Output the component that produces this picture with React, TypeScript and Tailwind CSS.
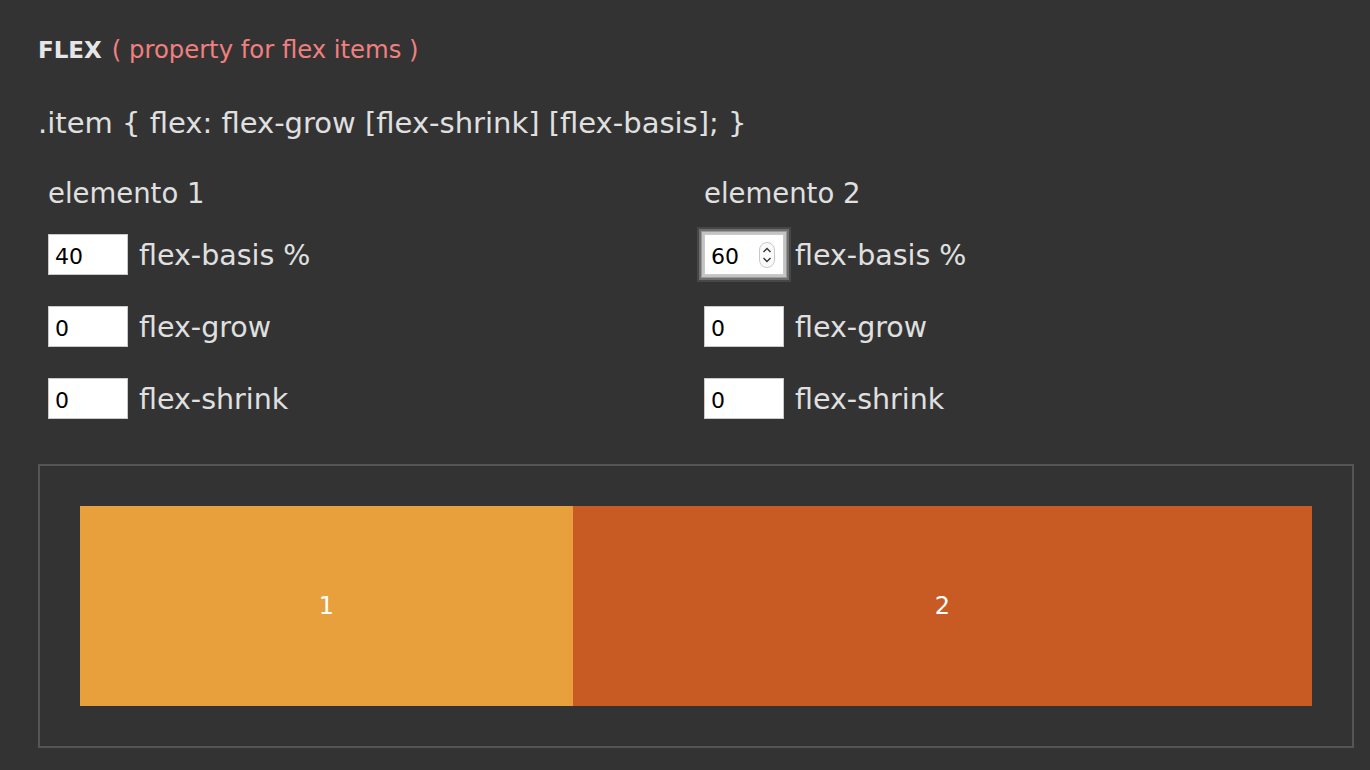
import React from "react";

const font = { fontFamily: '"DejaVu Sans", Verdana, sans-serif' };

function Spinner() {
  return (
    <svg width="16" height="26" viewBox="0 0 16 26" className="absolute right-[8px] top-[7px]">
      <rect x="0.5" y="0.5" width="15" height="25" rx="7.5" fill="#fafafa" stroke="#c8c8c8" />
      <path d="M4.5 10 L8 6.5 L11.5 10" fill="none" stroke="#333" strokeWidth="1.4" />
      <path d="M4.5 16 L8 19.5 L11.5 16" fill="none" stroke="#333" strokeWidth="1.4" />
    </svg>
  );
}

function Field({ value, label, focused }: { value: string; label: string; focused?: boolean }) {
  return (
    <div className="flex items-center h-[41px]">
      <div
        className={
          "relative w-[80px] h-[41px] bg-white border border-[#c9c9c9] flex items-center pl-[6px] pt-[3px] text-[22px] text-black " +
          (focused ? "shadow-[0_0_0_2px_#c4c4c4,0_0_0_3px_#9a9a9a,0_0_0_5px_#6e6e6e,0_0_0_7px_#474747]" : "")
        }
      >
        {value}
        {focused && <Spinner />}
      </div>
      <span className="ml-[11px] pt-[3px] text-[28.5px] text-[#e0e0e0] leading-none">{label}</span>
    </div>
  );
}

function Column({ title, basis }: { title: string; basis: string }) {
  return (
    <div className="pl-[10px]">
      <div className="text-[27.5px] text-[#e0e0e0] leading-none h-[27px] flex items-center pt-[1px]">{title}</div>
      <div className="mt-[27px] flex flex-col gap-[31px]">
        <Field value={basis} label="flex-basis %" focused={basis === "60"} />
        <Field value="0" label="flex-grow" />
        <Field value="0" label="flex-shrink" />
      </div>
    </div>
  );
}

export default function App() {
  return (
    <div className="w-full min-h-screen bg-[#333333] pl-[38px] pr-[16px] pt-[37px] pb-[22px]" style={font}>
      <div className="h-[26px] flex items-center leading-none">
        <span className="font-bold text-[#e6e6e6] text-[23px]">FLEX</span>
        <span className="text-[#f08080] ml-[10px] text-[24.3px]">( property for flex items )</span>
      </div>
      <div className="mt-[45px] text-[29px] leading-none text-[#e0e0e0] h-[30px] flex items-center">
        .item {"{"} flex: flex-grow [flex-shrink] [flex-basis]; {"}"}
      </div>
      <div className="mt-[42px] grid grid-cols-[656px_1fr]">
        <Column title="elemento 1" basis="40" />
        <Column title="elemento 2" basis="60" />
      </div>
      <div className="mt-[45px] border-2 border-[#555555] p-[40px]">
        <div className="flex h-[200px]">
          <div className="basis-[40%] bg-[#e8a03c] flex items-center justify-center text-[24px] text-white">1</div>
          <div className="basis-[60%] bg-[#c85b23] flex items-center justify-center text-[24px] text-white">2</div>
        </div>
      </div>
    </div>
  );
}
